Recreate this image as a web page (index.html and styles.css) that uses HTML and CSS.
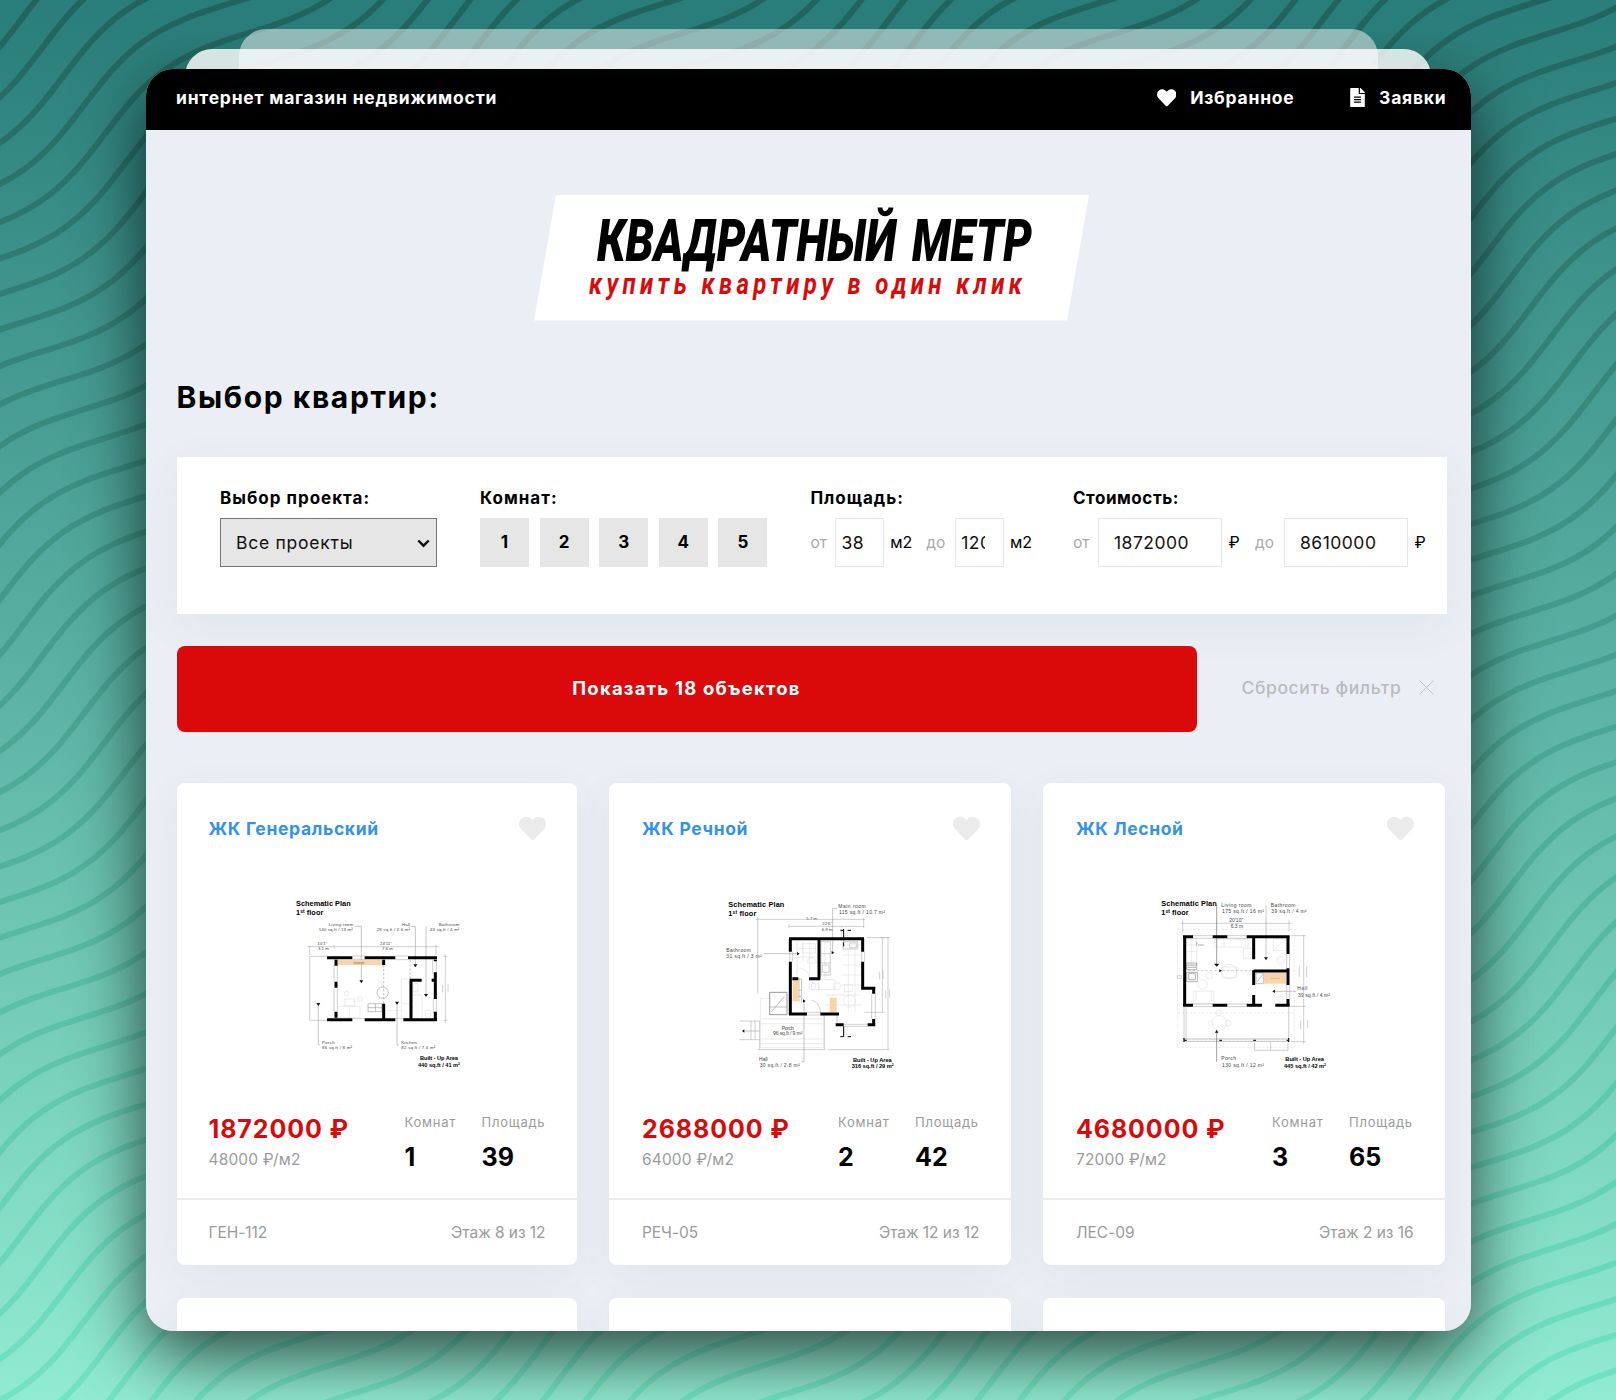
FILE: index.html
```
<!DOCTYPE html>
<html lang="ru">
<head>
<meta charset="utf-8">
<title>Квадратный метр</title>
<link rel="stylesheet" href="styles.css">
</head>
<body>
<svg class="backdrop" viewBox="0 0 1616 1400" aria-hidden="true">
  <defs>
    <linearGradient id="base" x1="0" y1="0" x2="0" y2="1"><stop offset="0" stop-color="#297d7a"/><stop offset="1" stop-color="#91ebd0"/></linearGradient>
    <linearGradient id="ink" x1="0" y1="0" x2="0" y2="1"><stop offset="0" stop-color="#21635f"/><stop offset="1" stop-color="#71e4c4"/></linearGradient>
    <path id="wave" d="M-1052.5 27.7
      c28.8-9.3 56.3-18.1 88.3-18.1s59.5 8.8 88.3 18.1 56.3 18.1 88.3 18.1 59.5-8.8 88.3-18.1
      c28.8-9.3 56.3-18.1 88.3-18.1s59.5 8.8 88.3 18.1 56.3 18.1 88.3 18.1 59.5-8.8 88.3-18.1
      c28.8-9.3 56.3-18.1 88.3-18.1s59.5 8.8 88.3 18.1 56.3 18.1 88.3 18.1 59.5-8.8 88.3-18.1
      c28.8-9.3 56.3-18.1 88.3-18.1s59.5 8.8 88.3 18.1 56.3 18.1 88.3 18.1 59.5-8.8 88.3-18.1
      c28.8-9.3 56.3-18.1 88.3-18.1s59.5 8.8 88.3 18.1 56.3 18.1 88.3 18.1 59.5-8.8 88.3-18.1
      c28.8-9.3 56.3-18.1 88.3-18.1s59.5 8.8 88.3 18.1 56.3 18.1 88.3 18.1 59.5-8.8 88.3-18.1
      c28.8-9.3 56.3-18.1 88.3-18.1s59.5 8.8 88.3 18.1 56.3 18.1 88.3 18.1 59.5-8.8 88.3-18.1"/>
    <g id="wave4"><use href="#wave"/><use href="#wave" y="35.57"/><use href="#wave" y="71.14"/><use href="#wave" y="106.71"/></g>
    <g id="wave16"><use href="#wave4"/><use href="#wave4" y="142.28"/><use href="#wave4" y="284.56"/><use href="#wave4" y="426.84"/></g>
    <mask id="waves" maskUnits="userSpaceOnUse" x="0" y="0" width="1616" height="1400">
      <g transform="matrix(.8191 -.5739 .5811 .8139 0 0)" fill="none" stroke="#fff" stroke-width="6">
        <use href="#wave16" y="-71.14"/><use href="#wave16" y="497.98"/><use href="#wave16" y="1067.1"/><use href="#wave16" y="1636.22"/>
      </g>
    </mask>
  </defs>
  <rect width="1616" height="1400" fill="url(#base)"/>
  <rect width="1616" height="1400" fill="url(#ink)" mask="url(#waves)"/>
</svg>

<svg class="symbols" aria-hidden="true">
  <symbol id="heart" viewBox="0 0 512 512"><path d="M462.3 62.6C407.5 15.9 326 24.3 275.7 76.2L256 96.5l-19.7-20.3C186.1 24.3 104.5 15.9 49.7 62.6c-62.8 53.6-66.1 149.8-9.9 207.9l193.5 199.8c12.5 12.9 32.8 12.9 45.3 0l193.5-199.8c56.3-58.1 53-154.3-9.8-207.9z"/></symbol>
  <symbol id="file" viewBox="0 0 384 512"><path d="M224 136V0H24C10.7 0 0 10.7 0 24v464c0 13.3 10.7 24 24 24h336c13.3 0 24-10.7 24-24V160H248c-13.2 0-24-10.8-24-24zm64 236c0 6.6-5.4 12-12 12H108c-6.6 0-12-5.4-12-12v-8c0-6.6 5.4-12 12-12h168c6.6 0 12 5.4 12 12v8zm0-64c0 6.6-5.4 12-12 12H108c-6.6 0-12-5.4-12-12v-8c0-6.6 5.4-12 12-12h168c6.6 0 12 5.4 12 12v8zm0-72v8c0 6.6-5.4 12-12 12H108c-6.6 0-12-5.4-12-12v-8c0-6.6 5.4-12 12-12h168c6.6 0 12 5.4 12 12zm96-114.1v6.1H256V0h6.1c6.4 0 12.5 2.5 17 7l97.9 98c4.5 4.5 7 10.6 7 16.9z"/></symbol>
</svg>

<div class="stage">
  <div class="shade"></div>
  <div class="sheet sheet-far"></div>
  <div class="sheet sheet-near"></div>

  <div class="window">
    <header class="topbar">
      <span class="tagline">интернет магазин недвижимости</span>
      <nav class="nav">
        <a class="nav-link"><svg class="nav-heart"><use href="#heart"/></svg>Избранное</a>
        <a class="nav-link"><svg class="nav-file"><use href="#file"/></svg>Заявки</a>
      </nav>
    </header>

    <main class="content">
      <svg class="logo" viewBox="0 0 555 126">
        <path fill="#fff" d="M22 0h533l-22 125.5H0z"/>
        <text class="logo-name" x="63" y="66" textLength="435" lengthAdjust="spacingAndGlyphs">КВАДРАТНЫЙ МЕТР</text>
        <text class="logo-claim" transform="translate(55 98.5) scale(.8 1)" textLength="541">купить квартиру в один клик</text>
      </svg>

      <h1 class="heading">Выбор квартир:</h1>

      <form class="filter">
        <div class="field">
          <label class="label">Выбор проекта:</label>
          <div class="select-box">
            <select class="select"><option>Все проекты</option></select>
            <svg class="chevron" viewBox="0 0 13 9"><path d="M1.300 1.500l5.200 5.200 5.200-5.200"/></svg>
          </div>
        </div>
        <div class="field">
          <label class="label">Комнат:</label>
          <div class="rooms"><span class="room">1</span><span class="room">2</span><span class="room">3</span><span class="room">4</span><span class="room">5</span></div>
        </div>
        <div class="field">
          <label class="label">Площадь:</label>
          <div class="range">
            <span class="hint from">от</span><input class="input input-area" value="38"><span class="unit unit-area">м2</span>
            <span class="hint to">до</span><input class="input input-area" value="120"><span class="unit unit-last">м2</span>
          </div>
        </div>
        <div class="field">
          <label class="label label-cost">Стоимость:</label>
          <div class="range">
            <span class="hint from">от</span><input class="input input-price" value="1872000"><span class="unit unit-price">₽</span>
            <span class="hint to">до</span><input class="input input-price" value="8610000"><span class="unit">₽</span>
          </div>
        </div>
      </form>

      <div class="actions">
        <button class="show">Показать 18 объектов</button>
        <a class="reset">Сбросить фильтр<svg class="cross" viewBox="0 0 15 15"><path d="M.5.5l14 14M14.500.5l-14 14"/></svg></a>
      </div>

      <section class="cards">
        <article class="card">
          <div class="card-head"><a class="title">ЖК Генеральский</a><svg class="like"><use href="#heart"/></svg></div>
          <svg class="plan" viewBox="4 0 600 585">
            <g class="t-bold"><text x="46" y="64" textLength="164">Schematic Plan</text><text x="46" y="90" textLength="82">1ˢᵗ floor</text>
              <text x="418" y="526" textLength="114">Built - Up Area</text><text x="412" y="546" textLength="126">440 sq.ft / 41 m²</text></g>
            <g class="t-small"><text x="144" y="122" textLength="74">Living room</text><text x="114" y="138" textLength="102">140 sq.ft / 13 m²</text><text x="364" y="122" textLength="24">Hall</text><text x="288" y="138" textLength="100">28 sq.ft / 2.6 m²</text><text x="474" y="122" textLength="62">Bathroom</text><text x="448" y="138" textLength="88">43 sq.ft / 4 m²</text><text x="124" y="476" textLength="38">Porch</text><text x="124" y="492" textLength="90">86 sq.ft / 8 m²</text><text x="362" y="476" textLength="46">Kitchen</text><text x="362" y="492" textLength="102">82 sq.ft / 7.6 m²</text><text x="110" y="181">10'1"</text><text x="112" y="196">3.1 m</text><text x="298" y="181">24'11"</text><text x="304" y="196">7.6 m</text></g>
            <g class="thin"><path d="M140 214H87v192h53M87 210v-28M466 210v-30M80 185H474M160 180v10M494 208V414M488 214h12M488 406h12M486 300v22M502 296v26"/>
              <path d="M170 240v50M160 240v50M170 310v68M160 310v68M215 213h38M215 223h38M215 401h38M344 401h38M344 213h38M344 224h38M456 224v42M467 224v42M458 340v44M467 340v44"/></g>
            <g class="faint"><path d="M192 342h30v20h-30zM172 364h66v34h-66zM206 364v34M362 282h26v120M362 282v122M362 356h28M312 376h50M394 330h30v70h-30M398 296h14v24h-14zM290 290h14v16M288 346l14-12M434 376h16v20h-16z"/><circle cx="198" cy="326" r="7"/><circle cx="238" cy="342" r="7"/></g>
            <g class="line"><circle cx="306" cy="323" r="17" fill="#fff"/><path d="M262 356h42v24h-42zM262 368h42M284 356v24"/><path stroke-dasharray="7 5" d="M309 240V356M388 226v60"/></g>
            <g class="lead"><path d="M222 124h20v164M390 124h14v116M436 124v205M113 480V356M118 480h-5M349 480V352M355 480h-6"/></g>
            <path fill="#fbd3a8" d="M170 225h134v15H170z"/><text class="t-tiny" x="218" y="236">storage</text>
            <path class="wall" d="M139 218h76M252 218h92M382 218h87M139 404h76M252 404h92M368 404h101M166 224v18M166 290v18M166 380v18M309 224v16M309 356v44M391 400V286M387 286h36M464 224v5M464 262v80M464 380v20M453 286h8"/>
            <path class="mark" d="M236 286h12l-6 9zM398 238h12l-6 9zM430 327h12l-6 9zM107 354h12l-6 9zM343 350h12l-6 9z"/>
          </svg>
          <div class="facts">
            <div><div class="price">1872000 ₽</div><div class="rate">48000 ₽/м2</div></div>
            <div><div class="stat">Комнат</div><div class="num">1</div></div>
            <div><div class="stat">Площадь</div><div class="num">39</div></div>
          </div>
          <footer class="card-foot"><span>ГЕН-112</span><span>Этаж 8 из 12</span></footer>
        </article>

        <article class="card">
          <div class="card-head"><a class="title">ЖК Речной</a><svg class="like"><use href="#heart"/></svg></div>
          <svg class="plan" viewBox="-3 0 600 585">
            <g class="t-bold"><text x="40" y="67" textLength="168">Schematic Plan</text><text x="40" y="93" textLength="84">1ˢᵗ floor</text>
              <text x="414" y="531" textLength="116">Built - Up Area</text><text x="410" y="550" textLength="126">316 sq.ft / 29 m²</text></g>
            <g class="t-small t-mid"><text x="370" y="70" textLength="82">Main room</text><text x="372" y="88" textLength="138">115 sq.ft / 10.7 m²</text><text x="34" y="200" textLength="74">Bathroom</text><text x="34" y="220" textLength="106">31 sq.ft / 3 m²</text><text x="200" y="434" textLength="36">Porch</text><text x="174" y="451" textLength="88">96 sq.ft / 9 m²</text><text x="132" y="528" textLength="26">Hall</text><text x="134" y="547" textLength="120">30 sq.ft / 2.8 m²</text></g>
            <g class="t-small"><text x="274" y="106">5.7 m</text><text x="322" y="120">22'6"</text><text x="320" y="137">6.9 m</text></g>
            <g class="faint"><path d="M136 340h28M136 340v148h190V390M136 402h190M136 416h190M136 462h190M136 476h190M246 170v104M264 170v60M284 170v100M250 190h56M250 216h56M330 170v110M380 180h60M380 210h60M380 240h60M380 270h60M380 300h60M400 190v190M420 190v190M330 330h108M330 360h110M380 120v50M262 176h40v28h-40zM290 296h22v18h-22zM388 298h24v22h-24z"/><circle cx="404" cy="348" r="18"/><circle cx="292" cy="304" r="11"/><circle cx="366" cy="304" r="11"/><path d="M310 284h50v30h-50zM278 222c12-8 26 0 26 12h-26zM252 250c18 0 28 12 30 26"/></g>
            <g class="thin"><path d="M128 96v230M128 494h202M328 390v104M122 103H450M222 124H448M222 118v12M446 98v32M456 158h66M519 158V494M502 158V382M448 382h60M340 494h184M496 158h12M512 158h14M494 260v24M504 256v26M512 316v24M524 314v24M224 200v30M232 200v30M440 200v30M449 200v30M74 408h60M74 464h60M108 408v56M120 408v56M134 408v86M276 382h40M276 390h40M470 326v76M481 326v76M366 384v32M384 418h74M384 424h74"/><path d="M318 170h28v100h-28zM318 206h28M318 234h28M322 240h20v22h-20zM384 170h44v22h-44zM404 174h20v14h-20zM290 346c14 2 26 18 26 38"/></g>
            <g class="line"><path stroke-width="3" d="M164 322h52v67h-52z"/><path d="M170 380l38-46M164 366h52M234 282h26v70M252 282v68M234 316h24M234 334h24"/></g>
            <g class="lead"><path d="M366 70h-13v132M146 206h100M267 530V348M260 530h7M84 438h50"/></g>
            <path fill="#fbd3a8" d="M233 281h18v68h-18zM344 338h21v44h-21z"/>
            <path class="wall" d="M222 161h225M226 161v39M226 230v160M222 387h54M316 387h56M312 161v120M232 281h18M282 281h34M443 161v39M443 230v84M440 310h41M476 306v20M476 402v20M362 419h24M458 419h23"/>
            <path class="wall wall-slim" d="M386 132v34M376 136h8M398 136h10M386 172v12M386 424v32M376 455h8M398 455h10"/>
            <path class="mark" d="M246 201l8 5-8 5zM350 198l8 5-8 5zM264 343l8 5-8 5zM88 433l-7 5 7 5z"/>
          </svg>
          <div class="facts">
            <div><div class="price">2688000 ₽</div><div class="rate">64000 ₽/м2</div></div>
            <div><div class="stat">Комнат</div><div class="num">2</div></div>
            <div><div class="stat">Площадь</div><div class="num">42</div></div>
          </div>
          <footer class="card-foot"><span>РЕЧ-05</span><span>Этаж 12 из 12</span></footer>
        </article>

        <article class="card">
          <div class="card-head"><a class="title">ЖК Лесной</a><svg class="like"><use href="#heart"/></svg></div>
          <svg class="plan" viewBox="-4 0 600 585">
            <g class="t-bold"><text x="36" y="63" textLength="166">Schematic Plan</text><text x="36" y="90" textLength="82">1ˢᵗ floor</text>
              <text x="408" y="528" textLength="116">Built - Up Area</text><text x="404" y="549" textLength="126">445 sq.ft / 42 m²</text></g>
            <g class="t-small t-mid"><text x="216" y="66" textLength="90">Living room</text><text x="218" y="84" textLength="126">175 sq.ft / 16 m²</text><text x="364" y="66" textLength="74">Bathroom</text><text x="366" y="84" textLength="106">39 sq.ft / 4 m²</text><text x="444" y="314" textLength="30">Hall</text><text x="446" y="335" textLength="96">39 sq.ft / 4 m²</text><text x="216" y="524" textLength="44">Porch</text><text x="218" y="546" textLength="126">130 sq.ft / 12 m²</text><text x="240" y="112">20'10"</text><text x="244" y="130">6.3 m</text></g>
            <g class="faint"><path stroke-dasharray="7 5" d="M85 134h350v353H85zM85 384h350"/><path d="M112 162h30v80h-30zM112 180h30M112 200h30M126 162v80M196 162h100v24h-100zM196 162h28v24M258 162h30v22M282 190h28v30h-28zM372 162h38v34h-38zM372 196l38-34M132 318h62v38h-62zM140 318v30M186 318v30M218 246h44v32h-44z"/><circle cx="160" cy="298" r="14"/><circle cx="180" cy="272" r="10"/><circle cx="240" cy="260" r="22"/><circle cx="394" cy="226" r="11"/><circle cx="394" cy="342" r="9"/><circle cx="210" cy="414" r="22"/><circle cx="208" cy="384" r="8"/><circle cx="236" cy="414" r="9"/><circle cx="184" cy="416" r="8"/></g>
            <g class="thin"><path d="M94 115H426M100 106v34M419 106v34M463 150V476M424 152h46M424 364h46M424 470h46M450 244v32M472 244v32M454 406v26M474 404v26M130 152h60M130 160h60M234 152h58M234 160h58M130 357h60M130 365h60M234 357h58M234 365h58M412 206v44M421 206v44M412 300v42M421 300v42M104 366v98M110 366v98M418 366v100M316 472v24h100v-24M364 470v26M84 272h12v8h-12z"/><path stroke-dasharray="8 5" d="M116 257H310"/><path stroke="#777" d="M112 262h32v28h-32zM118 266h20v18h-20zM112 234h30v20h-30zM114 240h26M114 247h26M142 170v12M146 180h18"/></g>
            <g class="line"><path d="M104 462H418M104 469H418M320 264h22v32h-22zM324 290l16-22"/></g>
            <g class="lead"><path stroke="#555" d="M202 58v180M202 530v-90"/><path d="M350 62v156M440 319h-64"/></g>
            <path fill="#fbd3a8" d="M344 264h66v32h-66z"/><path stroke="#ad8a66" d="M364 280h28"/>
            <path class="wall" d="M101 155h30M190 155h44M292 155h129M106 151v214M101 361h30M190 361h44M292 361h46M378 361h43M313 155v68M313 256v44M313 330v32M416 155v52M416 250v50M416 342v22M313 258h104"/>
            <path fill="none" stroke="#222" stroke-width="4" d="M104 466h8M210 466h8M312 466h8M412 466h8M104 459v12M418 459v12"/>
            <path class="mark" d="M194 236h16l-8 9zM344 217h12l-6 9zM197 443h10l-5-9zM377 314l-8 5 8 5zM210 253l8 4-8 5z"/>
          </svg>
          <div class="facts">
            <div><div class="price">4680000 ₽</div><div class="rate">72000 ₽/м2</div></div>
            <div><div class="stat">Комнат</div><div class="num">3</div></div>
            <div><div class="stat">Площадь</div><div class="num">65</div></div>
          </div>
          <footer class="card-foot"><span>ЛЕС-09</span><span>Этаж 2 из 16</span></footer>
        </article>

        <article class="card"></article>
        <article class="card"></article>
        <article class="card"></article>
      </section>
    </main>
  </div>
</div>
</body>
</html>
```
FILE: styles.css
```
* { box-sizing: border-box; }

body {
  margin: 0;
  height: 1400px;
  overflow: hidden;
  font-family: Inter, "Open Sans", sans-serif;
  color: #000;
}

.backdrop { position: absolute; inset: 0; width: 1616px; height: 1400px; }
.symbols { position: absolute; width: 0; height: 0; }

.stage { position: relative; width: 1325px; margin: 0 auto; padding-top: 69px; }

/* layers stacked behind the window */
.shade {
  position: absolute; top: 69px; left: 0; width: 100%; height: 1262px;
  border-radius: 27px; box-shadow: 0 23px 70px rgba(0, 0, 0, .7);
}
.sheet { position: absolute; height: 80px; border-radius: 27px; }
.sheet-far { top: 29px; left: 93px; right: 93px; background: rgba(242, 242, 242, .52); }
.sheet-near { top: 49px; left: 39.5px; right: 39.5px; background: rgba(255, 255, 255, .81); }

.window {
  position: relative; height: 1262px; overflow: hidden;
  border-radius: 27px; background: #ebeff5;
}

.topbar {
  display: flex; justify-content: space-between; align-items: center;
  height: 60.5px; padding: 0 24px 3px 30.5px;
  background: #000; color: #fff;
  font-size: 17.5px; font-weight: 700; letter-spacing: .78px;
}
.nav { display: flex; gap: 55.5px; }
.nav-link { display: flex; align-items: center; gap: 14px; }
.nav-heart { width: 19.5px; height: 19.5px; margin-top: -1px; fill: #fff; }
.nav-file { width: 15px; height: 19.5px; margin-top: -1px; fill: #fff; }

.content { display: flex; flex-direction: column; padding: 65.5px 25px 0 31px; }

.logo { align-self: center; width: 555px; height: 126px; overflow: visible; }
.logo-name { font: italic 900 59px Roboto, sans-serif; word-spacing: 6px; }
.logo-claim { font: italic 700 30px Roboto, sans-serif; fill: #db0a0a; }

.heading { margin: 56px 0 39.5px; font-size: 30px; line-height: 40px; font-weight: 700; letter-spacing: 1.6px; }

.filter {
  display: flex; gap: 43px; width: 1270px; height: 157px;
  padding: 31px 0 0 43.5px; background: #fff;
  box-shadow: 0 12px 45px rgba(0, 80, 80, .06);
}
.field { display: flex; flex-direction: column; gap: 10.5px; flex: none; }
.label { font-size: 17px; line-height: 20px; font-weight: 650; letter-spacing: 1px; }
.label-cost { letter-spacing: .55px; }
.select-box { position: relative; width: 217px; height: 48.5px; }
.select {
  appearance: none; width: 100%; height: 100%; padding: 0 16px 0 15px;
  border: 1px solid #767676; border-radius: 0; background: #e6e6e6; color: #111;
  font: 17.5px Inter, sans-serif; letter-spacing: .75px;
}
.chevron {
  position: absolute; right: 7px; top: 20.5px; width: 13px; height: 9px;
  fill: none; stroke: #111; stroke-width: 2.4;
}
.rooms { display: flex; gap: 10.6px; }
.room {
  display: flex; align-items: center; justify-content: center;
  width: 49px; height: 48.5px; background: #e6e6e6; font-size: 17px; font-weight: 700;
}
.range { display: flex; align-items: center; height: 48.5px; }
.hint { color: #aaa; font-size: 15.5px; }
.from { width: 25px; }
.to { width: 29px; }
.unit { margin-left: 6px; font-size: 16px; }
.unit-area { width: 36px; }
.unit-price { width: 26.5px; }
.unit-last { width: 20px; }
.input {
  height: 48.5px; border: 1.5px solid #e6e6e6; background: #fff; color: #111;
  font: 17.5px Inter, sans-serif; letter-spacing: .5px; outline: 0;
}
.input-area { width: 48.8px; padding: 0 18px 0 5px; }
.input-price { width: 124.5px; padding: 0 15px; }

.actions { display: flex; align-items: center; margin-top: 32.5px; }
.show {
  width: 1020px; height: 85.5px; padding: 0 0 2px; border: 0; border-radius: 8px;
  background: #db0a0a; color: #fff;
  font: 700 18.5px Inter, sans-serif; letter-spacing: 1.2px;
}
.reset {
  display: flex; align-items: center; gap: 17px; margin-left: 45px; padding-bottom: 2px;
  color: #bbb; font-size: 17.5px; font-weight: 500; letter-spacing: .6px;
}
.cross { width: 15px; height: 15px; fill: none; stroke: #c4c4c4; }

.cards { display: grid; grid-template-columns: 400px 401.5px 401.5px; gap: 33px 32.5px; margin-top: 51.5px; }
.card {
  display: flex; flex-direction: column; height: 481.5px;
  border-radius: 8px; background: #fff; box-shadow: 0 10px 40px rgba(0, 80, 80, .06);
}
.card-head { display: flex; justify-content: space-between; align-items: center; padding: 31.5px 31px 0 32px; }
.title { color: #3492ea; font-size: 17.5px; font-weight: 650; letter-spacing: .65px; }
.like { width: 27px; height: 27px; fill: #ebebeb; }

.plan { width: 200px; height: 195px; margin: 43px 0 0 105px; font-family: "Liberation Sans", Arial, sans-serif; }
.t-bold { font-size: 22px; font-weight: 700; }
.t-bold text:nth-child(n+3) { font-size: 17px; }
.t-small { font-size: 13px; fill: #444; }
.t-mid { font-size: 15px; }
.t-tiny { font-size: 10px; fill: #8a6c4a; }
.thin { fill: none; stroke: #aaa; stroke-width: 1.7; }
.faint { fill: none; stroke: #ddd; stroke-width: 1.7; }
.line { fill: none; stroke: #999; stroke-width: 1.8; }
.lead { fill: none; stroke: #999; stroke-width: 1.7; }
.wall { fill: none; stroke: #000; stroke-width: 9; }
.wall-slim { stroke-width: 3; }
.mark { fill: #111; }

.facts { display: grid; grid-template-columns: 196px 77px auto; height: 118px; padding: 33px 0 0 32px; }
.card:nth-child(n+2) .card-head, .card:nth-child(n+2) .facts, .card:nth-child(n+2) .card-foot { padding-left: 33px; }
.price { color: #db0a0a; font-size: 25px; line-height: 32px; font-weight: 700; letter-spacing: .9px; white-space: nowrap; }
.rate { margin-top: 5px; color: #9b9b9b; font-size: 15.5px; line-height: 20px; letter-spacing: .15px; }
.stat { margin-top: 1px; color: #9b9b9b; font-size: 13px; line-height: 16px; letter-spacing: .75px; }
.num { margin-top: 13px; font-size: 25px; line-height: 28px; font-weight: 700; }
.card-foot {
  display: flex; justify-content: space-between; align-items: center; flex: 1;
  padding: 0 31px 0 32px; border-top: 2px solid #ececec; color: #9b9b9b; font-size: 15.5px; letter-spacing: -.05px;
}
.card:empty { height: 120px; }
```
